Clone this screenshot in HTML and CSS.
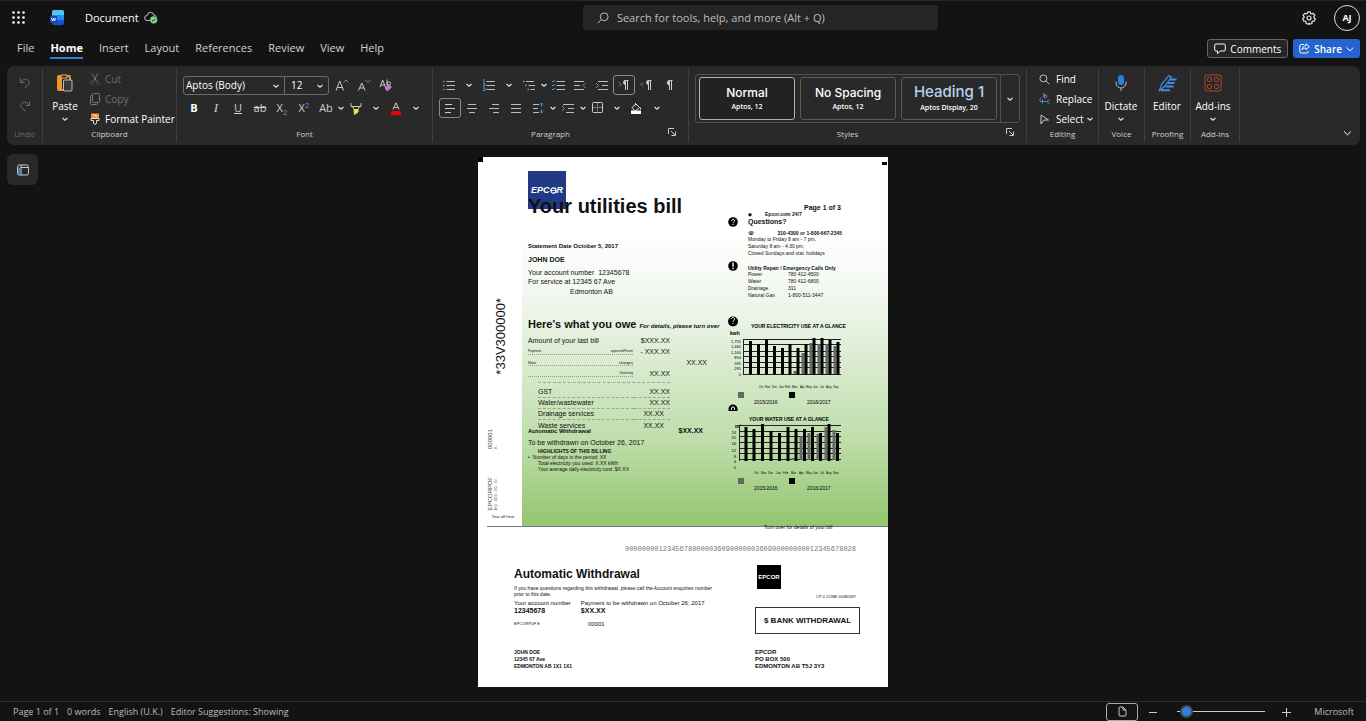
FILE: index.html
```html
<!DOCTYPE html>
<html lang="en">
<head>
<meta charset="utf-8">
<title>Document - Word</title>
<link rel="stylesheet" href="styles.css">
</head>
<body>
<svg class="defs" aria-hidden="true">
  <symbol id="chev" viewBox="0 0 8 8"><path d="M1.5 3 4 5.3 6.500 3" fill="none" stroke="currentColor" stroke-width="1.2"/></symbol>
  <symbol id="launch" viewBox="0 0 8 8"><path d="M.5 6V.5H6M3 3l4 4M7.500 3.500v4h-4" fill="none" stroke="#c8c8c8"/></symbol>
  <symbol id="lines" viewBox="0 0 14 12"><path d="M4.500 2.500H13M4.500 6.500H13M4.500 10.500H13" stroke="#bbb" stroke-width="1"/></symbol>
</svg>

<header class="titlebar">
  <div class="title-left">
    <button class="plain waffle" aria-label="App launcher"><svg width="13" height="13" viewBox="0 0 13 13" fill="#fff"><circle cx="1.500" cy="1.500" r="1.300"/><circle cx="6.500" cy="1.500" r="1.300"/><circle cx="11.500" cy="1.500" r="1.300"/><circle cx="1.500" cy="6.500" r="1.300"/><circle cx="6.500" cy="6.500" r="1.300"/><circle cx="11.500" cy="6.500" r="1.300"/><circle cx="1.500" cy="11.500" r="1.300"/><circle cx="6.500" cy="11.500" r="1.300"/><circle cx="11.500" cy="11.500" r="1.300"/></svg></button>
    <svg class="word" width="14" height="15" viewBox="0 0 14 15"><rect x="2" y="0" width="12" height="15" rx="2" fill="#1d4fd0"/><path d="M2 5V2a2 2 0 0 1 2-2h8a2 2 0 0 1 2 2v3z" fill="#4fc6f5"/><path d="M2 5h12v5H2z" fill="#2a8af0"/><rect x="0" y="6" width="7" height="7" rx="1" fill="#1746b8"/><path d="M1.500 8l1 3 1-3 1 3 1-3" fill="none" stroke="#fff" stroke-width=".9"/></svg>
    <span class="docname">Document</span>
    <svg width="14" height="13" viewBox="0 0 14 13"><path d="M6 9.500H3.300a2.500 2.500 0 0 1-.2-5 3.500 3.500 0 0 1 6.900-.3 2.400 2.400 0 0 1 2.300 1.600" fill="none" stroke="#ccc"/><circle cx="9.700" cy="8.800" r="3.600" fill="#7fd68a"/><path d="M8 9l1.200 1.200 2.300-2.500" fill="none" stroke="#173b1c"/></svg>
  </div>
  <label class="search"><svg width="12" height="12" viewBox="0 0 12 12" fill="none" stroke="#bbb"><circle cx="7.200" cy="4.800" r="3.900"/><path d="M4.400 7.600.8 11.200"/></svg><input type="text" aria-label="Search" placeholder="Search for tools, help, and more (Alt + Q)"></label>
  <div class="title-right">
    <button class="plain" aria-label="Settings"><svg width="14" height="14" viewBox="0 0 14 14" fill="none" stroke="#e8e8e8" stroke-width="1.200"><circle cx="7" cy="7" r="2"/><path d="M5.700.9h2.600l.4 1.600 1 .5 1.500-.7 1.700 2-1 1.400.2 1.200 1.200.9-.9 2.200-1.700.1-.8.9.1 1.500-2.300.8L7 12.100l-.7 1.200L4 12.500l.1-1.500-.8-.9-1.700-.1-.9-2.200 1.200-.9.2-1.200-1-1.400 1.700-2 1.500.7 1-.5z" stroke-linejoin="round"/></svg></button>
    <button class="avatar">AJ</button>
  </div>
</header>

<nav class="tabs">
  <a href="#">File</a><a href="#" class="on">Home</a><a href="#">Insert</a><a href="#">Layout</a><a href="#">References</a><a href="#">Review</a><a href="#">View</a><a href="#">Help</a>
  <div class="actions">
    <button class="comments"><svg width="12" height="12" viewBox="0 0 12 12" fill="none" stroke="#fff"><path d="M2 1h8a1.300 1.300 0 0 1 1.300 1.300v4.400A1.300 1.300 0 0 1 10 8H6.300L3.500 10.800V8H2A1.300 1.300 0 0 1 .7 6.700V2.300A1.300 1.300 0 0 1 2 1z"/></svg>Comments</button>
    <button class="share"><svg width="11" height="11" viewBox="0 0 11 11" fill="none" stroke="#fff"><path d="M5 1.500H2.300A1.500 1.500 0 0 0 .8 3v5.500A1.500 1.500 0 0 0 2.300 10h5.400a1.500 1.500 0 0 0 1.500-1.500V8M7 .8l3.300 2.900L7 6.500V5C5 5 4 5.700 3 7c.2-2.500 1.600-4.200 4-4.500z"/></svg>Share<svg width="8" height="8" viewBox="0 0 8 8"><path d="M.6 2.500 4 5.800l3.400-3.300" fill="none" stroke="#fff"/></svg></button>
  </div>
</nav>

<section class="ribbon" aria-label="Ribbon">
  <div class="group g-undo">
    <div class="body stack">
      <button class="plain dim" aria-label="Undo"><svg width="12" height="12" viewBox="0 0 12 12" fill="none" stroke="currentColor"><path d="M1.500 1.500v4h4M1.800 5.300C4 2 7.500 1.500 9.300 3.300c1.700 1.700 1 3.800-.6 5L5.500 11"/></svg></button>
      <button class="plain dim" aria-label="Redo"><svg width="12" height="12" viewBox="0 0 12 12" fill="none" stroke="currentColor"><path d="M10.500 1.500v4h-4M10.200 5.300C8 2 4.500 1.500 2.700 3.300c-1.700 1.700-1 3.800.6 5L6.500 11"/></svg></button>
    </div>
    <div class="label dim">Undo</div>
  </div>

  <div class="group g-clip">
    <div class="body">
      <button class="big"><svg width="16" height="18" viewBox="0 0 16 18"><rect x="1" y="2" width="12" height="14" rx="1" fill="none" stroke="#f0962e" stroke-width="2"/><rect x="1" y="3" width="4" height="13" fill="#f0962e"/><path d="M4 1h6v3H4z" fill="#2a2a2a" stroke="#f0b060"/><rect x="6.500" y="6" width="8.500" height="11" rx="1" fill="#3a3a3a" stroke="#bbb"/></svg>Paste<svg class="c" width="8" height="8"><use href="#chev"/></svg></button>
      <div class="cmds">
        <button class="cmd dim"><svg width="12" height="12" viewBox="0 0 12 12" fill="none" stroke="#777"><path d="M3 .5l4.700 8M9 .5l-4.700 8"/><g stroke="#2d5577"><circle cx="3" cy="9.800" r="1.600"/><circle cx="9" cy="9.800" r="1.600"/></g></svg>Cut</button>
        <button class="cmd dim"><svg width="12" height="12" viewBox="0 0 12 12" fill="none" stroke="#777"><rect x="3.500" y=".5" width="7" height="9" rx="1"/><path d="M3.500 2.500h-1a1 1 0 0 0-1 1v7a1 1 0 0 0 1 1h5a1 1 0 0 0 1-1v-1"/></svg>Copy</button>
        <button class="cmd"><svg width="12" height="12" viewBox="0 0 12 12"><rect x="2" y=".5" width="8" height="5" fill="#f0962e"/><path d="M2 5.500h8v2H7.500v3L6 11.500 4.500 10.500v-3H2z" fill="none" stroke="#ddd"/><path d="M5 1v2M7 1v3" stroke="#ffe0b0"/></svg>Format Painter</button>
      </div>
    </div>
    <div class="label">Clipboard</div>
  </div>

  <div class="group g-font">
    <div class="body rows">
      <div class="row">
        <span class="sel name"><select aria-label="Font"><option>Aptos (Body)</option></select><svg class="c" width="8" height="8"><use href="#chev"/></svg></span><span class="sel size"><select aria-label="Font size"><option>12</option></select><svg class="c" width="8" height="8"><use href="#chev"/></svg></span>
        <button class="ib gap" aria-label="Grow font"><svg width="14" height="14" viewBox="0 0 14 14" fill="none" stroke="#ccc"><path d="M1 12.500 4.800 3 8.600 12.500M2.300 9.500h5"/><path d="M8.500 4.500 11 2l2.500 2.500" stroke="#4a9adc"/></svg></button>
        <button class="ib" aria-label="Shrink font"><svg width="14" height="14" viewBox="0 0 14 14" fill="none" stroke="#ccc"><path d="M1.500 12.500 4.800 5l3.300 7.500M2.700 10h4.200"/><path d="M8.500 2 11 4.500 13.500 2" stroke="#4a9adc"/></svg></button>
        <button class="ib" aria-label="Clear formatting"><svg width="14" height="14" viewBox="0 0 14 14" fill="none" stroke="#ccc"><path d="M1 9 3.700 2 6.400 9M2 7h3.500M8 1.500V7"/><circle cx="9.800" cy="5.500" r="1.700"/><path d="M6 9.500 9.500 6.500l3 2.500-3.500 3.500H7.500z" fill="#c678d4" stroke="#c678d4"/></svg></button>
      </div>
      <div class="row">
        <button class="ib"><b>B</b></button><button class="ib"><i class="ital">I</i></button><button class="ib"><u>U</u></button><button class="ib"><s>ab</s></button><button class="ib">X<sub>2</sub></button><button class="ib">X<sup>2</sup></button><button class="ib">Ab</button><button class="cv" aria-label="Case options"><svg class="c" width="8" height="8"><use href="#chev"/></svg></button>
        <button class="ib" aria-label="Highlight"><svg width="12" height="13" viewBox="0 0 12 13" fill="none" stroke="#ccc"><path d="M1 1v3.500h10V1M2.500 4.500 4 7.500h4l1.500-3"/><path d="M4 7.500h4V10l-3.500 2.500z" fill="#f5e642" stroke="#f5e642"/></svg></button><button class="cv w18" aria-label="Highlight colours"><svg class="c" width="8" height="8"><use href="#chev"/></svg></button>
        <button class="ib" aria-label="Font colour"><svg width="12" height="13" viewBox="0 0 12 13"><path d="M3 7.500 6 .8l3 6.700M4.200 5.500h3.600" fill="none" stroke="#ccc"/><rect x="1" y="9" width="10" height="4" rx="1" fill="#e00"/></svg></button><button class="cv w18" aria-label="Font colours"><svg class="c" width="8" height="8"><use href="#chev"/></svg></button>
      </div>
    </div>
    <div class="label">Font</div>
  </div>

  <div class="group g-para">
    <div class="body rows">
      <div class="row">
        <button class="ib w20" aria-label="Bullets"><svg width="14" height="12"><use href="#lines"/><path d="M1 2.500h1.500M1 6.500h1.500M1 10.500h1.500" stroke="#4a9adc" stroke-width="1.500"/></svg></button><button class="cv w20" aria-label="Bullet options"><svg class="c" width="8" height="8"><use href="#chev"/></svg></button>
        <button class="ib w20" aria-label="Numbering"><svg width="14" height="12"><use href="#lines"/><path d="M2 0v4M1 5h2v2H1M1 9h2v2.500H1" fill="none" stroke="#4a9adc"/></svg></button><button class="cv w20" aria-label="Numbering options"><svg class="c" width="8" height="8"><use href="#chev"/></svg></button>
        <button class="ib w20" aria-label="Multilevel list"><svg width="14" height="12" fill="none"><path d="M4 2.500h8M6.500 6.500H13M8.500 10.500H13" stroke="#bbb"/><path d="M1 2.500h1.500M3 6.500h1.500M5.500 10.500H7" stroke="#4a9adc" stroke-width="1.500"/></svg></button><button class="cv w10" aria-label="Multilevel options"><svg class="c" width="8" height="8"><use href="#chev"/></svg></button>
        <button class="ib w20" aria-label="Checklist"><svg width="14" height="12"><use href="#lines"/><path d="M0 2l1 1 2-2M0 6l1 1 2-2M0 10l1 1 2-2" fill="none" stroke="#4a9adc"/></svg></button>
        <button class="ib" aria-label="Outdent"><svg width="14" height="12" fill="none"><path d="M1 2.500h10M1 6.500h6M1 10.500h10" stroke="#bbb"/><path d="M12.500 4 10 6.500 12.500 9" stroke="#4a9adc"/></svg></button>
        <button class="ib" aria-label="Indent"><svg width="14" height="12" fill="none"><path d="M3 2.500h10M7 6.500h6M3 10.500h10" stroke="#bbb"/><path d="M1 4 3.500 6.500 1 9" stroke="#4a9adc"/></svg></button>
        <button class="ib on" aria-label="Left to right"><svg width="12" height="12" fill="none"><path d="M7.500 1.500a2 2 0 0 0 0 4z" fill="#ccc"/><path d="M10.500 1.500H7.500a2 2 0 0 0 0 4M7.500 1.500V11M9.500 1.500V11" stroke="#ccc"/><path d="M1 3.500 3 5.500 1 7.500" stroke="#4a9adc"/></svg></button>
        <button class="ib" aria-label="Right to left"><svg width="12" height="12" fill="none"><path d="M8.500 1.500a2 2 0 0 0 0 4z" fill="#ccc"/><path d="M11.500 1.500H8.500a2 2 0 0 0 0 4M8.500 1.500V11M10.500 1.500V11" stroke="#ccc"/><path d="M3 3.500 1 5.500l2 2" stroke="#4a9adc"/></svg></button>
        <button class="ib" aria-label="Show marks"><svg width="12" height="12" fill="none"><path d="M7.500 1.500a2 2 0 0 0 0 4.400z" fill="#ccc"/><path d="M10.500 1.500H7.500a2.200 2.200 0 0 0 0 4.400M7.500 1.500V11M9.500 1.500V11" stroke="#ccc"/></svg></button>
      </div>
      <div class="row">
        <button class="ib on" aria-label="Align left"><svg width="12" height="12"><path d="M1 2.500h7M1 6.500h10M1 10.500h6" stroke="#ccc"/></svg></button><button class="ib" aria-label="Centre"><svg width="12" height="12"><path d="M2 2.500h8M1 6.500h10M3 10.500h6" stroke="#bbb"/></svg></button><button class="ib" aria-label="Align right"><svg width="12" height="12"><path d="M4 2.500h7M1 6.500h10M5 10.500h6" stroke="#bbb"/></svg></button><button class="ib" aria-label="Justify"><svg width="12" height="12"><path d="M1 2.500h10M1 6.500h10M1 10.500h10" stroke="#bbb"/></svg></button><button class="ib" aria-label="Line spacing"><svg width="12" height="12" fill="none"><path d="M1 2.500h6M1 6.500h5M1 10.500h6" stroke="#bbb"/><path d="M9.500 1v3.500M8 2.500 9.500 1 11 2.500M9.500 11V7.500M8 9.500 9.500 11 11 9.500" stroke="#4a9adc"/></svg></button><button class="cv" aria-label="Spacing options"><svg class="c" width="8" height="8"><use href="#chev"/></svg></button>
        <button class="ib" aria-label="Special indent"><svg width="14" height="12" fill="none"><path d="M2 2.500h11M7 6.500h6M5 10.500h8" stroke="#bbb"/><path d="M1 4 3.500 6.500 1 9" stroke="#4a9adc"/></svg></button><button class="cv" aria-label="Indent options"><svg class="c" width="8" height="8"><use href="#chev"/></svg></button>
        <button class="ib" aria-label="Borders"><svg width="12" height="12" fill="none"><rect x=".5" y=".5" width="10" height="10" rx="1" stroke="#ccc"/><path d="M5.500 1v9M1 5.500h9" stroke="#777"/></svg></button><button class="cv w16" aria-label="Border options"><svg class="c" width="8" height="8"><use href="#chev"/></svg></button>
        <button class="ib" aria-label="Shading"><svg width="12" height="12" fill="none"><path d="M5.500 1v2.500M2 5.500l4-3.500 3.500 3.500L6 8.500H4.500z" stroke="#ddd"/><path d="M10.500 5.500v2" stroke="#ddd"/><rect x="1" y="8.500" width="10" height="3.500" fill="#fff"/></svg></button><button class="cv w20" aria-label="Shading options"><svg class="c" width="8" height="8"><use href="#chev"/></svg></button>
      </div>
    </div>
    <div class="label has-launch">Paragraph<button class="launch" aria-label="Paragraph settings"><svg width="8" height="8"><use href="#launch"/></svg></button></div>
  </div>

  <div class="group g-styles">
    <div class="body">
      <div class="gallery">
        <button class="card on"><span>Normal</span><small>Aptos, 12</small></button>
        <button class="card"><span>No Spacing</span><small>Aptos, 12</small></button>
        <button class="card"><span class="h1">Heading 1</span><small>Aptos Display, 20</small></button>
        <button class="more" aria-label="More styles"><svg class="c" width="8" height="8"><use href="#chev"/></svg></button>
      </div>
    </div>
    <div class="label has-launch">Styles<button class="launch" aria-label="Styles settings"><svg width="8" height="8"><use href="#launch"/></svg></button></div>
  </div>

  <div class="group g-edit">
    <div class="body">
      <div class="cmds">
        <button class="cmd"><svg width="11" height="11" viewBox="0 0 12 12" fill="none" stroke="#ccc"><circle cx="4.800" cy="4.800" r="3.800"/><path d="M7.600 7.600 11.200 11.200"/></svg>Find</button>
        <button class="cmd"><svg width="11" height="12" viewBox="0 0 11 12" fill="none"><path d="M5 0v4.500" stroke="#c678d4"/><circle cx="6.500" cy="3.500" r="1.300" stroke="#c678d4"/><path d="M2.500 4.500c-2 1-2 3-1 4h2M3.500 6.500v4M4.500 8.500h2.500M10.500 7.500c-2-.7-2.500.3-2.500 1.200s1 1.800 2.500 1" stroke="#4a9adc"/></svg>Replace</button>
        <button class="cmd"><svg width="11" height="11" viewBox="0 0 11 11" fill="none" stroke="#ccc"><path d="M2 1l7.500 5H5L2 10z"/></svg>Select<svg class="c" width="8" height="8"><use href="#chev"/></svg></button>
      </div>
    </div>
    <div class="label">Editing</div>
  </div>
  <div class="group g-voice">
    <div class="body"><button class="big"><svg width="12" height="18" viewBox="0 0 12 18" fill="none"><rect x="3" y="1" width="6" height="10" rx="3" fill="#2f7fdc"/><path d="M1 7.500V9a5 5 0 0 0 10 0V7.500M6 14v3" stroke="#bbb"/></svg>Dictate<svg class="c" width="8" height="8"><use href="#chev"/></svg></button></div>
    <div class="label">Voice</div>
  </div>
  <div class="group g-proof">
    <div class="body"><button class="big"><svg width="20" height="18" viewBox="0 0 20 18" fill="none" stroke="#3f8fe0"><path d="M2 17 5 9.500 12 1.500l2.500 1.500-7 9.500z" stroke-width="1.200"/><path d="M12.500 5.500h7M10.500 9h7M8.500 12.500h8M4 16.300h9" stroke-width="2"/></svg>Editor</button></div>
    <div class="label">Proofing</div>
  </div>
  <div class="group g-add">
    <div class="body"><button class="big"><svg width="18" height="18" viewBox="0 0 18 18" fill="none" stroke="#b34a20"><rect x="1" y="1" width="16" height="16" rx="2"/><rect x="3.500" y="3.500" width="4" height="4" rx="1"/><rect x="10.500" y="3.500" width="4" height="4" rx="1"/><rect x="3.500" y="10.500" width="4" height="4" rx="1"/><rect x="10.500" y="10.500" width="4" height="4" rx="1"/></svg>Add-ins<svg class="c" width="8" height="8"><use href="#chev"/></svg></button></div>
    <div class="label">Add-ins</div>
  </div>
  <button class="collapse" aria-label="Collapse ribbon"><svg width="9" height="8" viewBox="0 0 8 8"><path d="M.6 2.500 4 5.800l3.400-3.300" fill="none" stroke="#fff"/></svg></button>
</section>

<main class="work">
  <button class="navpane" aria-label="Navigation pane"><svg width="12" height="12" viewBox="0 0 12 12" fill="none" stroke="#ccc"><rect x=".6" y="1" width="10.800" height="10" rx="1.500"/><path d="M4 1v10M4 3.500h7.500"/><rect x="1" y="3.500" width="2" height="7" fill="#2f7fdc" stroke="none"/></svg></button>

  <article class="paper">
    <span class="mark tl"></span><span class="mark tr"></span>
    <section class="bill">
      <div class="strip">
        <span class="code">*33V300000*</span>
        <span class="v v1">000001<br><small>0 -</small></span>
        <span class="v v2">EPCORPDF<br><small>E/0 &nbsp; 003 - 00 - 0/-</small></span>
        <span class="tear">Tear off here</span>
      </div>
      <div class="content">
        <div class="colA">
          <div class="logo"><em>EPC<svg width="7" height="7" viewBox="0 0 7 7"><circle cx="3.500" cy="3.500" r="2.600" fill="none" stroke="#fff" stroke-width="1.300"/><path d="M1 3.500h5" stroke="#fff" stroke-width=".8"/></svg>R</em></div>
          <h1>Your utilities bill</h1>
          <p class="t6 bold stmt">Statement Date October 5, 2017</p>
          <p class="t7 bold who">JOHN DOE</p>
          <p class="t7">Your account number &nbsp;12345678</p>
          <p class="t7">For service at 12345 67 Ave</p>
          <p class="t7 city">Edmonton AB</p>
          <h2>Here's what you owe <em>For details, please turn over</em></h2>
          <table class="ledger">
            <tr><td>Amount of your last bill</td><td>$XXX.XX</td><td></td></tr>
            <tr><td><span class="lead"><i>Payments</i><i>approved/Patron</i></span></td><td>- XXX.XX</td><td></td></tr>
            <tr><td><span class="lead n"><i>New</i><i>charges</i></span></td><td></td><td>XX.XX</td></tr>
            <tr><td><span class="lead"><i></i><i>Delivering</i></span></td><td>XX.XX</td><td></td></tr>
          </table>
          <table class="ledger sub">
            <tr><td>GST</td><td>XX.XX</td></tr>
            <tr><td>Water/wastewater</td><td>XX.XX</td></tr>
            <tr><td>Drainage services</td><td class="in">XX.XX</td></tr>
            <tr><td>Waste services</td><td class="in">XX.XX</td></tr>
          </table>
          <p class="auto"><b>Automatic Withdrawal</b><b class="sum">$XX.XX</b></p>
          <p class="t7 wd">To be withdrawn on October 26, 2017</p>
          <div class="hl"><b>HIGHLIGHTS OF THIS BILLING</b><span class="dot">Number of days in the period: XX</span><span>Total electricity you used: X.XX kWh</span><span>Your average daily electricity cost: $X.XX</span></div>
        </div>
        <div class="colB">
          <p class="t7 bold pageno">Page 1 of 3</p>
          <div class="info">
            <svg class="ic q" width="10" height="10" viewBox="0 0 10 10"><circle cx="5" cy="5" r="4.800"/><path d="M3.600 3.900c0-2 2.900-2 2.900-.2C6.500 4.900 5 4.900 5 6.100M5 7v1" fill="none" stroke="#fff"/></svg>
            <div>
              <p class="t5 bold web"><span>◆</span>Epcor.com 24/7</p>
              <p class="t7 bold">Questions?</p>
              <p class="t5 bold phone"><span>☏</span><span>310-4300 or 1-800-667-2345</span></p>
              <p class="t5 hours">Monday to Friday 8 am - 7 pm,<br>Saturday 8 am - 4:30 pm,<br>Closed Sundays and stat. holidays</p>
            </div>
          </div>
          <div class="info rep">
            <svg class="ic" width="10" height="10" viewBox="0 0 10 10"><circle cx="5" cy="5" r="4.800"/><path d="M5 1.500v4.200M5 6.800v1.500" stroke="#fff" stroke-width="1.400"/></svg>
            <div>
              <p class="t5 bold head">Utility Repair / Emergency Calls Only</p>
              <dl class="t5"><dt>Power</dt><dd>780 412-4500</dd><dt>Water</dt><dd>780 412-6800</dd><dt>Drainage</dt><dd>311</dd><dt>Natural Gas</dt><dd>1-800-511-3447</dd></dl>
            </div>
          </div>
          <svg class="chart" viewBox="728 317 120 91" width="120" height="91">
            <circle cx="733" cy="322.500" r="5"/><path d="M731.500 320c0-2 3-2 3 0 0 1.500-1.500 1.500-1.500 3m0 1v1" fill="none" stroke="#fff"/>
            <text class="ct" x="751" y="328.500">YOUR ELECTRICITY USE AT A GLANCE</text><text class="cu" x="730" y="335.500">kwh</text>
            <g class="ax"><text x="741" y="344">1,755</text><text x="741" y="348.500">1,460</text><text x="741" y="355">1,160</text><text x="741" y="359.500">894</text><text x="741" y="366">595</text><text x="741" y="371">295</text><text x="741" y="377">0</text></g>
            <path class="gl" d="M743.500 340v36M743 340.500h98M743 345.500h98M743 352.500h98M743 357.500h98M743 363.500h98M743 368.500h98M743 375.500h98"/>
            <path class="g" d="M795 372v3M803 354v21M811 344v31M819 345v30M827 345v30M835 347v28"/>
            <path class="b" d="M750.500 342v33.500M758.500 345v30.500M766.500 340v35.500M774.500 347v28.500M782.500 349v26.500M790 345v30.500M798 349v26.500M806 345v30.500M814 339v36.500M822 339v36.500M830 341v34.500M838 343v32.500"/>
            <g class="mo"><text x="759" y="389">Oct</text><text x="765" y="389">Nov</text><text x="772" y="389">Dec</text><text x="779" y="389">Jan</text><text x="785" y="389">Feb</text><text x="792" y="389">Mar</text><text x="800" y="389">Apr</text><text x="806" y="389">May</text><text x="813" y="389">Jun</text><text x="820" y="389">Jul</text><text x="826" y="389">Aug</text><text x="833" y="389">Sep</text></g>
            <rect x="738" y="393" width="6" height="6" fill="#666"/><rect x="789" y="393" width="6" height="6"/>
            <text class="yr" x="754" y="405">2015/2016</text><text class="yr" x="807" y="405">2016/2017</text>
          </svg>
          <svg class="chart" viewBox="728 405 120 91" width="120" height="91">
            <path d="M728.500 412v-2a4.500 4.500 0 0 1 9 0v2z"/><path d="M731.500 411v-2c0-1.500 3-1.500 3 0v2" fill="none" stroke="#fff"/>
            <text class="ct" x="749" y="421.500">YOUR WATER USE AT A GLANCE</text><text class="cu" x="735" y="428.500">m³</text>
            <g class="ax"><text x="736" y="435">24</text><text x="736" y="440">20</text><text x="736" y="446">16</text><text x="736" y="453">12</text><text x="736" y="459">8</text><text x="736" y="464">4</text><text x="736" y="470">0</text></g>
            <path class="gl" d="M739.500 426v36M739 426.500h102M739 432.500h102M739 437.500h102M739 443.500h102M739 449.500h102M739 454.500h102M739 460.500h102"/>
            <path class="g" d="M793 459v2M801 437v24M809 434v27M818 435v26M826 428v33M834 431v30"/>
            <path class="b" d="M746 428v34M754 430v32M762.500 425v37M771 432v30M779.500 434v28M788 428v34M796 430v32M804.500 430v32M812.500 428v34M820.500 434v28M829 425v37M837.500 434v28"/>
            <g class="mo"><text x="754" y="475">Oct</text><text x="761" y="475">Nov</text><text x="768" y="475">Dec</text><text x="776" y="475">Jan</text><text x="783" y="475">Feb</text><text x="791" y="475">Mar</text><text x="799" y="475">Apr</text><text x="806" y="475">May</text><text x="813" y="475">Jun</text><text x="820" y="475">Jul</text><text x="826" y="475">Aug</text><text x="833" y="475">Sep</text></g>
            <rect x="738" y="479" width="6" height="6" fill="#666"/><rect x="789" y="479" width="6" height="6"/>
            <text class="yr" x="754" y="491">2015/2016</text><text class="yr" x="807" y="491">2016/2017</text>
          </svg>
          <p class="t5 turn">Turn over for details of your bill</p>
        </div>
      </div>
    </section>

    <section class="slip">
      <p class="ocr">0000000012345678000003609000000360900000000012345678028</p>
      <div class="slipcols">
        <div class="sl">
          <h3>Automatic Withdrawal</h3>
          <p class="t5 note">If you have questions regarding this withdrawal, please call the Account enquiries number<br>prior to this date.</p>
          <dl class="pay"><div><dt>Your account number</dt><dd>12345678</dd></div><div><dt>Payment to be withdrawn on October 26, 2017</dt><dd>$XX.XX</dd></div></dl>
          <p class="ref"><span>EPCORPDF E</span><span>00001</span></p>
          <address>JOHN DOE<br>12345 67 Ave<br>EDMONTON AB 1X1 1X1</address>
        </div>
        <div class="sr">
          <div class="logo small"><b>EPCOR</b></div>
          <p class="cp">CP 0 12388 20080587</p>
          <p class="bank">$ BANK WITHDRAWAL</p>
          <address>EPCOR<br>PO BOX 500<br>EDMONTON AB T5J 3Y3</address>
        </div>
      </div>
    </section>
  </article>
</main>

<footer class="status">
  <span>Page 1 of 1</span><span>0 words</span><span>English (U.K.)</span><span>Editor Suggestions: Showing</span>
  <span class="grow"></span>
  <button class="view" aria-label="Print layout"><svg width="9" height="11" viewBox="0 0 9 11" fill="none" stroke="#ccc"><path d="M1 2a1 1 0 0 1 1-1h3l3 3v5a1 1 0 0 1-1 1H2a1 1 0 0 1-1-1zM5 1v3h3"/></svg></button>
  <button class="plain" aria-label="Zoom out"><svg width="10" height="10"><path d="M1 5.500h8" stroke="#ccc"/></svg></button>
  <input class="zoom" type="range" min="0" max="100" value="3" aria-label="Zoom">
  <button class="plain" aria-label="Zoom in"><svg width="10" height="10"><path d="M1 5.500h9M5.500 1v9" stroke="#ccc"/></svg></button>
  <span class="ms">Microsoft</span>
</footer>
</body>
</html>
```

FILE: styles.css
```css
* { box-sizing: border-box; }
body {
  margin: 0;
  min-height: 100vh;
  display: flex;
  flex-direction: column;
  background: #131313;
  color: #e8e8e8;
  font: 11px/14px "Open Sans", "Noto Sans", sans-serif;
  border-top: 1px solid #262626;
}
.defs { position: absolute; width: 0; height: 0; }
button, input, select { font: inherit; color: inherit; }
button { background: none; border: 0; padding: 0; display: inline-flex; align-items: center; justify-content: center; white-space: nowrap; }
svg { display: block; flex: none; }
p, h1, h2, h3, dl, dd { margin: 0; }
.grow { flex: 1; }
.c { color: #e0e0e0; }

.titlebar { display: grid; grid-template-columns: minmax(0, 583fr) 26vw minmax(0, 428fr); align-items: center; height: 33px; }
.title-left { display: flex; align-items: center; padding-left: 12px; }
.word { margin: 0 21px 0 25px; }
.docname { margin-right: 5px; color: #fff; }
.search { display: flex; align-items: center; height: 25px; padding: 0 14px; gap: 8px; border-radius: 4px; background: #252525; }
.search input { flex: 1; min-width: 0; padding: 0; border: 0; outline: 0; background: none; font-size: 11px; }
.search input::placeholder { color: #bdbdbd; opacity: 1; }
.title-right { display: flex; justify-content: flex-end; align-items: center; gap: 18px; padding-right: 6px; }
.avatar { width: 26px; height: 26px; border: 1px solid #ddd; border-radius: 50%; font-size: 9px; font-weight: 700; color: #fff; }

.tabs { display: flex; align-items: center; gap: 16px; height: 29px; padding: 0 6px 0 17px; }
.tabs a { color: #d2d2d2; text-decoration: none; line-height: 19px; border-bottom: 2px solid transparent; }
.tabs a.on { color: #fff; font-weight: 700; border-color: #2f7fdc; }
.actions { display: flex; gap: 5px; margin-left: auto; }
.comments, .share { height: 19px; border-radius: 3px; font-size: 10px; gap: 4px; padding: 0 6px; color: #fff; }
.comments { background: #252525; border: 1px solid #666; }
.share { background: #2564cf; font-weight: 600; }

.ribbon { display: flex; height: 79px; margin: 3px 6px 0 7px; padding: 3px 0; background: #292929; border-radius: 7px; }
.group { flex: none; display: flex; flex-direction: column; border-right: 1px solid #404040; }
.body { display: flex; height: 58px; }
.label { position: relative; text-align: center; font-size: 8px; line-height: 12px; padding-top: 1px; color: #d0d0d0; }
.has-launch { padding-right: 20px; }
.launch { position: absolute; right: 12px; top: 1px; }
.dim, .label.dim { color: #6d6d6d; }
.g-undo { width: 36px; }
.g-clip { width: 134px; }
.g-font, .g-para { width: 256px; }
.g-styles { width: 338px; }
.g-edit { width: 72px; }
.g-voice, .g-proof { width: 46px; }
.g-add { width: 49px; }
.stack { flex-direction: column; align-items: center; padding-top: 8px; gap: 11px; }
.big { flex-direction: column; justify-content: flex-start; width: 44px; padding-top: 5px; font-size: 10px; color: #fff; }
.big svg { margin-bottom: 7px; }
.big svg.c { margin: 2px 0 0; }
.cmds { display: flex; flex-direction: column; padding-left: 2px; }
.cmd { flex: none; justify-content: flex-start; height: 20px; gap: 4px; font-size: 10px; color: #fff; }
.cmd.dim { color: #6d6d6d; }
.g-edit .cmds { padding-left: 12px; }
.g-edit .cmd { gap: 6px; }
.g-edit .cmd .c { margin-left: -4px; }

.rows { flex-direction: column; padding: 6px 0 0 6px; gap: 3px; }
.row { display: flex; align-items: center; height: 20px; }
.sel { position: relative; height: 19px; }
.sel select { appearance: none; width: 100%; height: 19px; border: 1px solid #6a6a6a; background: #292929; padding: 0 2px; font-size: 10px; color: #fff; border-radius: 3px 0 0 3px; }
.sel.name { width: 102px; }
.sel.size { width: 45px; margin-left: -1px; }
.sel.size select { border-radius: 0 3px 3px 0; padding-left: 6px; }
.sel .c { position: absolute; right: 5px; top: 6px; pointer-events: none; }
.ib { width: 22px; height: 20px; color: #cfcfcf; }
.ib.gap { margin-left: 2px; }
.ib.on { border: 1px solid #8a8a8a; border-radius: 3px; }
.ib b { color: #fff; }
.ital { font-family: "Liberation Serif", serif; font-size: 13px; }
sub, sup { font-size: 8px; line-height: 8px; color: #4a9adc; }
sub { align-self: flex-end; margin-bottom: 2px; }
sup { align-self: flex-start; margin-top: 3px; }
.cv { width: 8px; height: 20px; }
.w10 { width: 10px; }
.w16 { width: 16px; }
.w18 { width: 18px; }
.w20 { width: 20px; }

.gallery { display: flex; flex: 1; height: 49px; margin: 5px 6px 0; padding: 2px 0 2px 3px; border: 1px solid #505050; border-radius: 3px; }
.card { flex: 1; flex-direction: column; margin-right: 5px; border: 1px solid #5a5a5a; border-radius: 3px; color: #fff; font: 500 12px/15px Inter, sans-serif; }
.card.on { border-color: #b0b0b0; background: #222; }
.card small { font: 600 7px/13px "Open Sans", sans-serif; }
.card .h1 { font-size: 15px; line-height: 18px; color: #b4d4f0; }
.more { width: 19px; margin: -2px 0; border-left: 1px solid #505050; }
.card:nth-child(3) { margin-right: 3px; }
.collapse { margin-left: auto; align-self: flex-end; padding: 0 8px 5px 0; }

.work { flex: 1; display: flex; position: relative; justify-content: center; padding: 12px 0 14px; }
.navpane { position: absolute; left: 7px; top: 9px; width: 31px; height: 31px; background: #292929; border-radius: 6px; }

/* Scanned utility bill */
.paper { position: relative; width: 410px; background: #fff; color: #111; font: 7px/8px "Liberation Sans", Arial, sans-serif; }
.mark { position: absolute; background: #000; }
.tl { left: 0; top: 0; width: 5px; height: 5px; }
.tr { right: 1px; top: 5px; width: 5px; height: 3px; }
.bill { display: grid; grid-template-columns: 44px 1fr; }
.strip { display: flex; flex-direction: column; align-items: center; padding-top: 141px; border-bottom: 1px solid #777; margin-left: 9px; }
.code { writing-mode: vertical-rl; transform: rotate(180deg); font-size: 13px; line-height: 14px; margin-right: 7px; }
.v { writing-mode: vertical-rl; transform: rotate(180deg); font-size: 6px; line-height: 6px; color: #444; margin-right: 23px; }
.v small { font-size: 4px; line-height: 4px; }
.v1 { margin-top: 54px; }
.v2 { margin-top: 28px; }
.tear { font-size: 4px; line-height: 5px; margin-top: 4px; margin-right: 3px; }
.content { display: grid; grid-template-columns: 200px 1fr; padding-left: 6px; height: 370px; background: linear-gradient(#fff 20%, #f1f7ef 38%, #dfeed6 52%, #bfdeac 76%, #92c66f 100%); border-bottom: 1px solid #777; }
.bold { font-weight: 700; }
.t5 { font-size: 5px; line-height: 6px; }
.t6 { font-size: 6px; line-height: 8px; }
.t7 { font-size: 7px; line-height: 9px; }
.logo { width: 38px; height: 38px; background: #213a85; color: #fff; display: flex; align-items: center; justify-content: center; font-size: 9px; font-weight: 700; }
.logo em { display: flex; align-items: center; }
.colA { padding-top: 14px; }
h1 { margin-top: -15px; font-size: 20px; line-height: 24px; white-space: nowrap; }
.stmt { margin-top: 24px; }
.who { margin: 5px 0 4px; }
.city { margin: 1px 0 0 42px; }
h2 { margin: 21px 0 2px; font-size: 11px; line-height: 14px; white-space: nowrap; }
h2 em { font-size: 6px; }
.ledger { border-collapse: collapse; table-layout: fixed; width: 179px; }
.ledger tr { height: 11px; }
.ledger td { padding: 0; white-space: nowrap; line-height: 10px; }
.ledger td:nth-child(2) { width: 36px; text-align: right; }
.ledger td:nth-child(3) { width: 37px; text-align: right; }
.lead { display: flex; justify-content: space-between; width: 105px; height: 6px; font-size: 3px; line-height: 5px; border-bottom: 1px dotted #999; }
.lead i { font-style: normal; }
.lead.n { font-size: 4px; }
.sub { width: 132px; margin: 3px 0 0 10px; border-top: 1px dashed #9aa894; padding-top: 4px; border-collapse: separate; border-spacing: 0; }
.sub tr { height: 11px; }
.sub td { border-bottom: 1px dashed #9aa894; }
.sub tr:last-child td { border: 0; }
.ledger td.in { padding-right: 6px; }
.auto { display: flex; justify-content: space-between; align-items: center; width: 175px; height: 8px; margin-top: -4px; font-size: 6px; }
.sum { font-size: 7px; }
.wd { margin: 3px 0 1px; }
.hl { display: grid; padding-left: 10px; font-size: 5px; line-height: 6px; }
.hl .dot { margin-left: -5px; }
.hl .dot::before { content: "•"; margin: 0 3px 0 -5px; }
.colB { display: flex; flex-direction: column; padding-top: 47px; }
.pageno { width: 113px; text-align: right; line-height: 8px; }
.info { display: grid; grid-template-columns: 20px 94px; }
.q { margin-top: 5px; }
.web { margin-top: -1px; display: grid; grid-template-columns: 17px 1fr; }
.phone { display: flex; justify-content: space-between; width: 94px; margin: 4px 0 0; white-space: nowrap; }
.hours { line-height: 7px; }
.rep { margin-top: 4px; }
.head { margin-top: 4px; white-space: nowrap; }
.rep dl { display: grid; grid-template-columns: 40px 1fr; row-gap: 1px; }
.chart { margin-top: 18px; font-family: "Liberation Sans", Arial, sans-serif; font-size: 5px; }
.chart + .chart { margin-top: -3px; }
.ct { font-size: 5px; font-weight: 700; }
.cu { font-size: 5px; font-weight: 700; }
.ax { font-size: 4px; text-anchor: end; }
.mo { font-size: 3px; }
.yr { font-size: 5px; }
.gl { fill: none; stroke: #222; stroke-width: 1; }
.g { stroke: #666; stroke-width: 3; }
.b { stroke: #000; stroke-width: 3; }
.turn { margin: auto 0 -4px 36px; }

.slip { padding: 18px 28px 15px 36px; }
.ocr { display: flex; justify-content: flex-end; margin-right: 4px; font: 7px/8px "Liberation Mono", monospace; color: #777; }
.slipcols { display: grid; grid-template-columns: 241px 1fr; margin-top: 12px; }
h3 { font-size: 12px; line-height: 16px; }
.sl h3 { margin-top: 1px; }
.note { margin-top: 3px; white-space: nowrap; line-height: 6px; }
.pay { display: flex; gap: 10px; margin-top: 2px; font-size: 6px; }
.pay dd { font-size: 7px; font-weight: 700; }
.ref { display: flex; align-items: center; gap: 48px; margin-top: 5px; font-size: 6px; }
.ref span:first-child { font-size: 4px; }
address { font-style: normal; font-weight: 700; font-size: 5px; line-height: 7px; }
.sl address { margin-top: 21px; }
.sr address { margin-top: 15px; font-size: 6px; }
.logo.small { width: 24px; height: 24px; margin-left: 2px; background: #000; font-size: 6px; }
.cp { font-size: 4px; text-align: right; margin: 4px 4px 6px; }
.bank { border: 1px solid #333; height: 27px; display: flex; align-items: center; justify-content: center; font-size: 8px; font-weight: 700; }

.status { display: flex; align-items: center; gap: 8px; height: 20px; padding: 0 12px 0 13px; border-top: 1px solid #2b2b2b; color: #bdbdbd; font-size: 9px; }
.view { width: 32px; height: 18px; border: 1px solid #aaa; border-radius: 3px; }
.status .plain { margin: 0 2px; }
.zoom { appearance: none; width: 88px; height: 14px; margin: 0 6px 0 9px; background: linear-gradient(#ccc, #ccc) center / 100% 1px no-repeat; }
.zoom::-webkit-slider-thumb { appearance: none; width: 13px; height: 13px; border-radius: 50%; border: 2px solid #4a4a4a; background: #2f7fdc; }
.ms { margin-left: 13px; }
```
